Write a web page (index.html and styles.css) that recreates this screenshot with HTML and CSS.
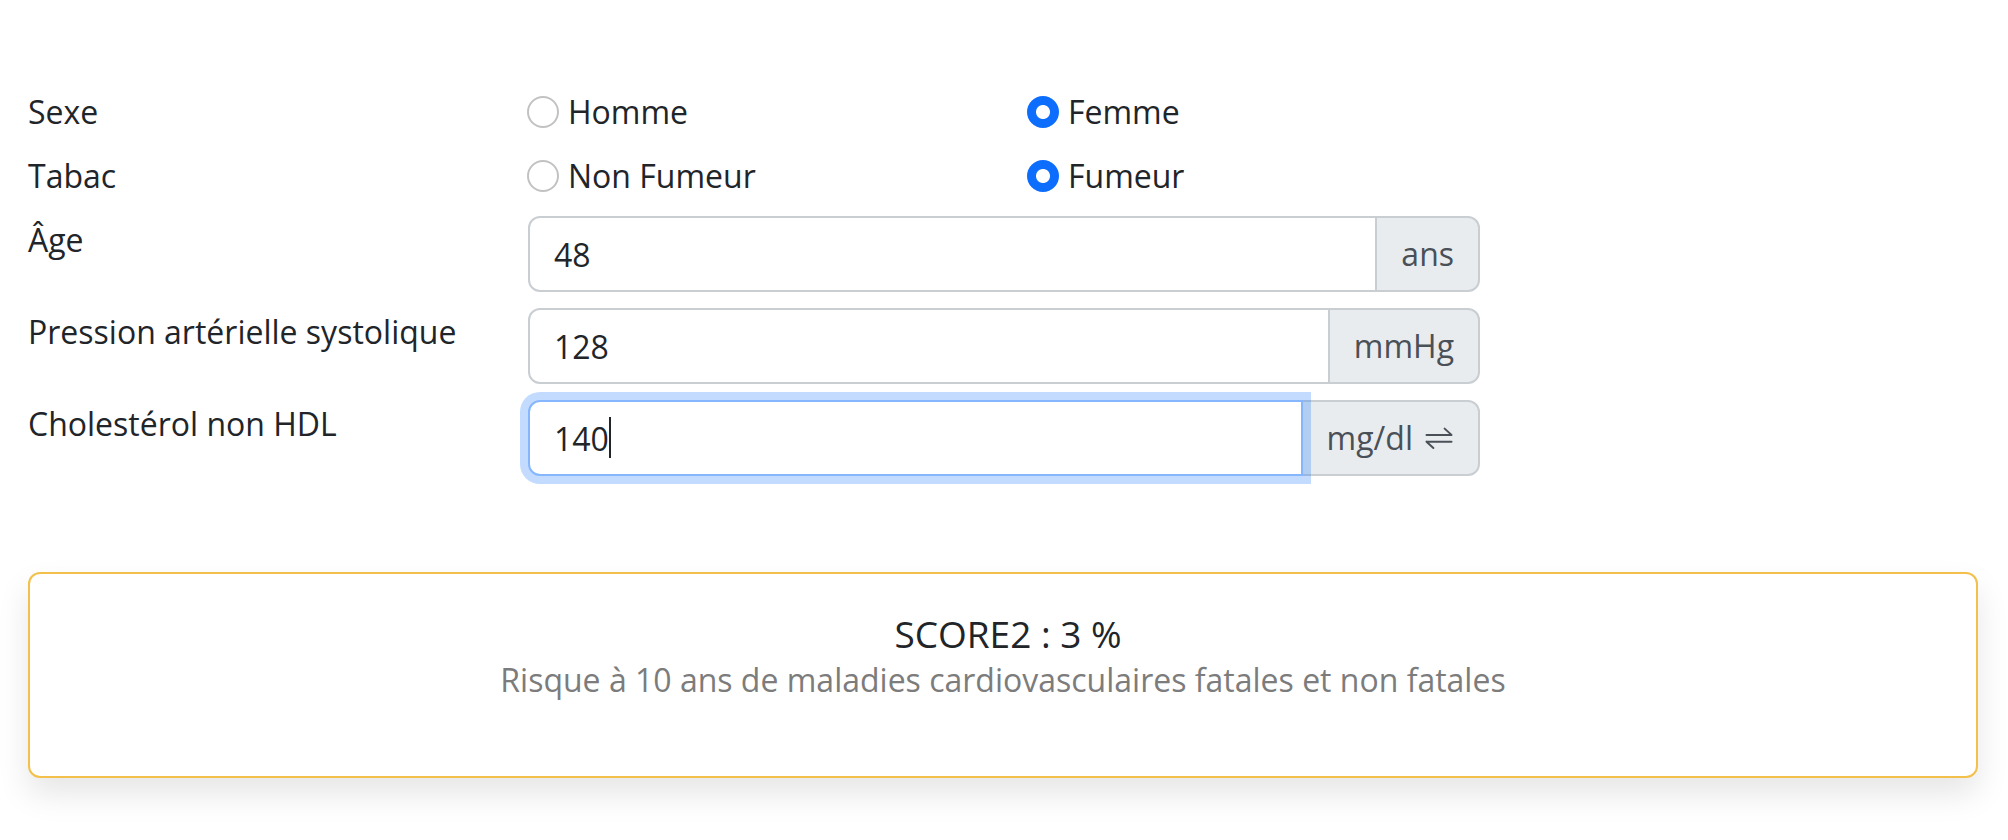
FILE: index.html
```html
<!DOCTYPE html>
<html lang="fr">
<head>
<meta charset="utf-8">
<title>SCORE2</title>
<link rel="stylesheet" href="styles.css">
</head>
<body>
<div class="page">
  <form class="form">
    <div class="row">
      <div class="label">Sexe</div>
      <label class="check"><input type="radio" name="sexe" class="radio"><span>Homme</span></label>
      <label class="check"><input type="radio" name="sexe" class="radio" checked><span>Femme</span></label>
    </div>
    <div class="row">
      <div class="label">Tabac</div>
      <label class="check"><input type="radio" name="tabac" class="radio"><span>Non Fumeur</span></label>
      <label class="check"><input type="radio" name="tabac" class="radio" checked><span>Fumeur</span></label>
    </div>
    <div class="row">
      <label class="label" for="age">Âge</label>
      <div class="input-group">
        <input id="age" class="control" type="text" value="48">
        <span class="addon">ans</span>
      </div>
    </div>
    <div class="row">
      <label class="label" for="pas">Pression artérielle systolique</label>
      <div class="input-group">
        <input id="pas" class="control" type="text" value="128">
        <span class="addon">mmHg</span>
      </div>
    </div>
    <div class="row">
      <label class="label" for="chol">Cholestérol non HDL</label>
      <div class="input-group">
        <input id="chol" class="control focused" type="text" value="140">
        <span class="caret"></span>
        <span class="addon">mg/dl
          <svg class="swap" viewBox="0 0 24 24" width="30" height="30" aria-hidden="true">
            <path d="M2 9.5H22M22 9.5L16.5 4.5" fill="none" stroke="#495057" stroke-width="1.6" stroke-linecap="round" stroke-linejoin="round"/>
            <path d="M2 15H22M2 15L7.5 20" fill="none" stroke="#495057" stroke-width="1.6" stroke-linecap="round" stroke-linejoin="round"/>
          </svg>
        </span>
      </div>
    </div>
  </form>

  <div class="result">
    <div class="score">SCORE2 : 3 %</div>
    <div class="subtitle">Risque à 10 ans de maladies cardiovasculaires fatales et non fatales</div>
  </div>
</div>
</body>
</html>
```

FILE: styles.css
```css
* {
  box-sizing: border-box;
}

html, body {
  margin: 0;
  padding: 0;
  background: #ffffff;
}

body {
  font-family: "Open Sans", "Noto Sans", "DejaVu Sans", sans-serif;
  font-size: 32px;
  line-height: 48px;
  color: #212529;
}

.page {
  padding: 88px 30px 60px 28px;
}

.row {
  display: grid;
  grid-template-columns: 452px 452px 452px;
  column-gap: 48px;
  margin-bottom: 16px;
}

.label {
  display: block;
}

.check {
  display: flex;
  align-items: flex-start;
  gap: 9px;
  margin-left: -1px;
}

.radio {
  -webkit-appearance: none;
  appearance: none;
  flex: 0 0 32px;
  width: 32px;
  height: 32px;
  margin: 8px 0 0 0;
  border: 2px solid #c2c2c2;
  border-radius: 50%;
  background: #ffffff;
}

.radio:checked {
  border-color: #0d6efd;
  background: radial-gradient(circle, #ffffff 0 6.5px, #0d6efd 7.5px);
}

.input-group {
  grid-column: span 2;
  display: flex;
  position: relative;
  width: 952px;
}

.control {
  flex: 1 1 auto;
  min-width: 0;
  height: 76px;
  padding: 12px 24px;
  font: inherit;
  color: #212529;
  border: 2px solid #c9ced3;
  border-radius: 12px 0 0 12px;
  background: #ffffff;
  outline: none;
}

.control.focused {
  position: relative;
  z-index: 3;
  border-color: #86b7fe;
  box-shadow: 0 0 0 8px rgba(13, 110, 253, 0.25);
}

.caret {
  position: absolute;
  z-index: 4;
  left: 81px;
  top: 17px;
  width: 2px;
  height: 41px;
  background: #212529;
}

.addon {
  display: flex;
  align-items: center;
  gap: 11px;
  height: 76px;
  padding: 12px 24px;
  margin-left: -2px;
  color: #495057;
  background: #e9ecef;
  border: 2px solid #c9ced3;
  border-radius: 0 12px 12px 0;
  white-space: nowrap;
}

.swap {
  display: block;
}

.result {
  margin-top: 96px;
  padding: 38px 24px 72px;
  border: 2px solid #f3c14b;
  border-radius: 12px;
  background: #ffffff;
  box-shadow: 0 16px 32px rgba(0, 0, 0, 0.1);
  text-align: center;
}

.score {
  font-size: 37px;
  line-height: 44px;
  color: #212529;
  padding-left: 10px;
}

.subtitle {
  font-size: 32px;
  line-height: 48px;
  color: #7c7c7c;
}
```
